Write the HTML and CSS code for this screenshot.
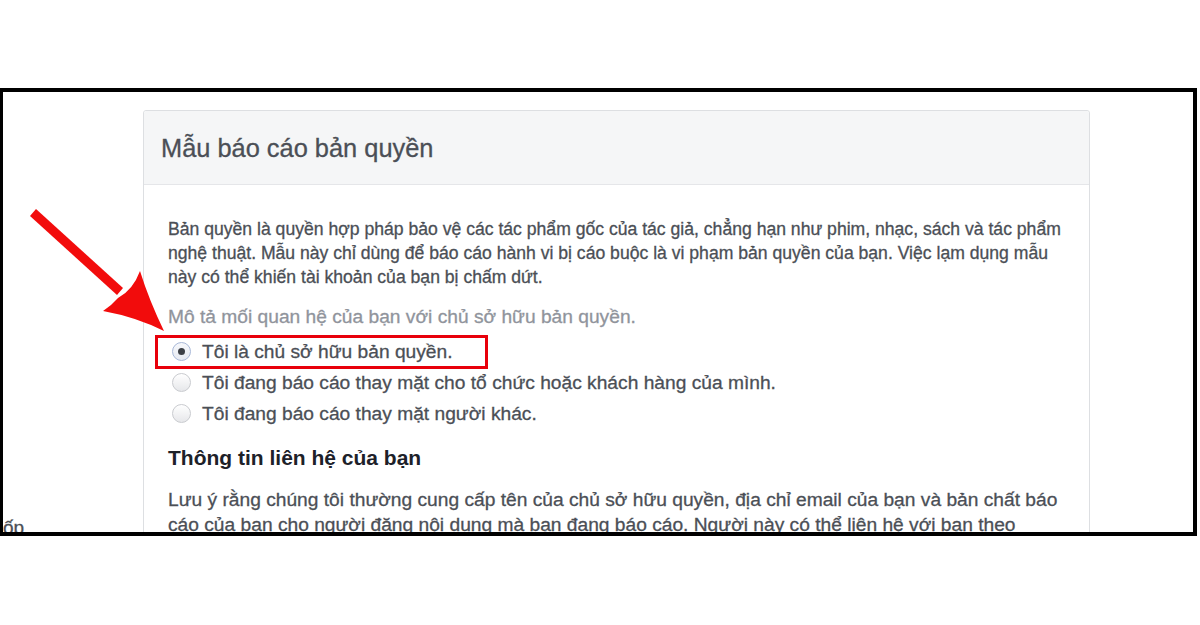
FILE: index.html
```html
<!DOCTYPE html>
<html lang="vi">
<head>
<meta charset="utf-8">
<title>Mẫu báo cáo bản quyền</title>
<link rel="stylesheet" href="styles.css">
</head>
<body>
<div class="page">
  <div class="frame">
    <div class="side-text">ốp</div>
    <section class="card">
      <header class="card-header">
        <h1 class="card-title">Mẫu báo cáo bản quyền</h1>
      </header>
      <div class="card-body">
        <p class="intro">Bản quyền là quyền hợp pháp bảo vệ các tác phẩm gốc của tác giả, chẳng hạn như phim, nhạc, sách và tác phẩm nghệ thuật. Mẫu này chỉ dùng để báo cáo hành vi bị cáo buộc là vi phạm bản quyền của bạn. Việc lạm dụng mẫu này có thể khiến tài khoản của bạn bị chấm dứt.</p>
        <p class="label">Mô tả mối quan hệ của bạn với chủ sở hữu bản quyền.</p>
        <ul class="radios">
          <li class="radio-row"><span class="radio checked"></span><span class="radio-text">Tôi là chủ sở hữu bản quyền.</span></li>
          <li class="radio-row"><span class="radio"></span><span class="radio-text">Tôi đang báo cáo thay mặt cho tổ chức hoặc khách hàng của mình.</span></li>
          <li class="radio-row"><span class="radio"></span><span class="radio-text">Tôi đang báo cáo thay mặt người khác.</span></li>
        </ul>
        <h2 class="section-title">Thông tin liên hệ của bạn</h2>
        <p class="note">Lưu ý rằng chúng tôi thường cung cấp tên của chủ sở hữu quyền, địa chỉ email của bạn và bản chất báo cáo của bạn cho người đăng nội dung mà bạn đang báo cáo. Người này có thể liên hệ với bạn theo thông tin bạn cung cấp.</p>
      </div>
    </section>
  </div>
  <svg class="annotations" width="1200" height="625" viewBox="0 0 1200 625" aria-hidden="true">
    <rect x="156.5" y="336.5" width="330" height="31" fill="none" stroke="#e8000b" stroke-width="3"/>
    <path fill="#f20c0c" d="M36,209 L30,216 L117,295 L123,288 Z"/>
    <path fill="#f20c0c" d="M164,331 Q149,300 140,271 Q133,290 118,298 Q112,305 103,311 Q136,317 164,331 Z"/>
  </svg>
</div>
</body>
</html>
```
FILE: styles.css
```css
* { box-sizing: border-box; }
html, body { margin: 0; padding: 0; background: #fff; }
body {
  font-family: "Liberation Sans", Arial, Helvetica, sans-serif;
  color: #4b4f56;
}
.page {
  position: relative;
  width: 1200px;
  height: 625px;
  padding-top: 88px;
}
.frame {
  position: relative;
  width: 1197px;
  height: 448px;
  border: 4px solid #000;
  border-left-width: 3px;
  overflow: hidden;
  background: #fff;
}
.side-text {
  position: absolute;
  left: 0;
  top: 425px;
  font-size: 19px;
  line-height: 22px;
  color: #4b4f56;
  -webkit-text-stroke: 0.3px currentColor;
}
.card {
  margin: 18px 0 0 140px;
  width: 947px;
  border: 1px solid #dddfe2;
  border-radius: 3px 3px 0 0;
  background: #fff;
  min-height: 600px;
  -webkit-text-stroke: 0.3px currentColor;
}
.card-header {
  height: 74px;
  background: #f5f6f7;
  border-bottom: 1px solid #e5e6e9;
  display: flex;
  align-items: center;
  padding: 0 0 0 17px;
  border-radius: 3px 3px 0 0;
}
.card-title {
  margin: 0;
  font-size: 25.4px;
  font-weight: normal;
  color: #4b4f56;
  line-height: 30px;
}
.card-body {
  padding: 32px 24px 0 24px;
}
.intro {
  margin: 0;
  font-size: 17.6px;
  line-height: 24px;
  color: #4b4f56;
}
.label {
  margin: 16px 0 0;
  font-size: 19.2px;
  line-height: 24px;
  color: #90949c;
}
.radios {
  list-style: none;
  margin: 7px 0 0;
  padding: 0;
}
.radio-row {
  display: flex;
  align-items: center;
  height: 31px;
  padding-left: 4px;
}
.radio {
  width: 19px;
  height: 19px;
  border-radius: 50%;
  border: 1px solid #c9cbcf;
  background: linear-gradient(#ffffff, #e6e7ea);
  margin-right: 11px;
  flex: none;
  display: flex;
  align-items: center;
  justify-content: center;
  -webkit-text-stroke: 0;
}
.radio.checked {
  border-color: #a8b8d8;
  background: linear-gradient(#f7f8fb, #e6eaf2);
}
.radio.checked::after {
  content: "";
  width: 7px;
  height: 7px;
  border-radius: 50%;
  background: #3b3f46;
}
.radio-text {
  font-size: 19.2px;
  line-height: 24px;
  color: #4b4f56;
}
.section-title {
  margin: 15px 0 0;
  font-size: 21px;
  line-height: 28px;
  font-weight: bold;
  color: #1d2129;
  -webkit-text-stroke: 0;
}
.note {
  margin: 15px 0 0;
  font-size: 19.2px;
  line-height: 25px;
  color: #4b4f56;
}
.annotations {
  position: absolute;
  left: 0;
  top: 0;
  pointer-events: none;
}
```
